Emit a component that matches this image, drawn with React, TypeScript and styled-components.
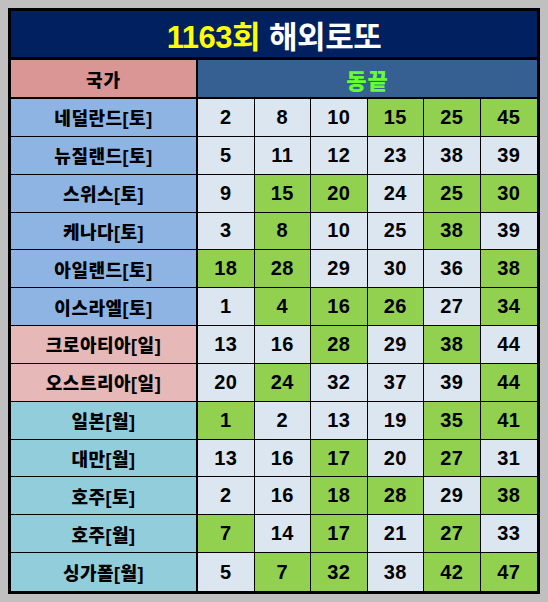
import styled, { createGlobalStyle } from "styled-components";

const GlobalStyle = createGlobalStyle`
  html, body {
    margin: 0;
    padding: 0;
    background: #c0c0c0;
  }
  body {
    font-family: "Liberation Sans", "Noto Sans CJK KR", sans-serif;
  }
`;

const Page = styled.div`
  padding: 8px 0 0 8px;
  width: 548px;
  height: 602px;
  box-sizing: border-box;
`;

const Board = styled.div`
  width: 532px;
  height: 586px;
  box-sizing: border-box;
  border: 3px solid #000;
  display: grid;
  grid-template-columns: 187px repeat(6, 1fr);
  grid-template-rows: 49px 39px repeat(13, 1fr);
`;

const Title = styled.div`
  grid-column: 1 / -1;
  box-sizing: border-box;
  border-bottom: 3px solid #000;
  background: #002060;
  display: flex;
  align-items: center;
  justify-content: center;
  gap: 9px;
  font-size: 31px;
  font-weight: bold;
  letter-spacing: -0.5px;
`;

const Round = styled.span`
  color: #ffff00;
`;

const Name = styled.span`
  color: #ffffff;
`;

const HeadCell = styled.div<{ $bg: string; $color: string; $size: number; $span?: number }>`
  grid-column: span ${(p) => p.$span ?? 1};
  box-sizing: border-box;
  border-bottom: 2px solid #000;
  border-right: ${(p) => (p.$span ? "none" : "2px solid #000")};
  background: ${(p) => p.$bg};
  color: ${(p) => p.$color};
  font-size: ${(p) => p.$size}px;
  font-weight: 900;
  letter-spacing: 1px;
  display: flex;
  align-items: center;
  justify-content: center;
`;

const Country = styled.div<{ $bg: string; $last: boolean }>`
  box-sizing: border-box;
  border-right: 2px solid #000;
  border-bottom: ${(p) => (p.$last ? "none" : "1px solid #000")};
  background: ${(p) => p.$bg};
  color: #000;
  font-size: 18px;
  font-weight: 900;
  letter-spacing: 0.5px;
  display: flex;
  align-items: center;
  justify-content: center;
`;

const Num = styled.div<{ $hit: boolean; $last: boolean; $end: boolean }>`
  box-sizing: border-box;
  border-right: ${(p) => (p.$end ? "none" : "1px solid #000")};
  border-bottom: ${(p) => (p.$last ? "none" : "1px solid #000")};
  background: ${(p) => (p.$hit ? "#92d050" : "#dce6f1")};
  color: #000;
  font-size: 20px;
  font-weight: bold;
  letter-spacing: 0.5px;
  display: flex;
  align-items: center;
  justify-content: center;
`;

const BLUE = "#8db4e2";
const PINK = "#e6b8b7";
const TEAL = "#92cddc";

type Row = { name: string; bg: string; nums: number[]; hits: number[] };

const rows: Row[] = [
  { name: "네덜란드[토]", bg: BLUE, nums: [2, 8, 10, 15, 25, 45], hits: [15, 25, 45] },
  { name: "뉴질랜드[토]", bg: BLUE, nums: [5, 11, 12, 23, 38, 39], hits: [] },
  { name: "스위스[토]", bg: BLUE, nums: [9, 15, 20, 24, 25, 30], hits: [15, 20, 25, 30] },
  { name: "케나다[토]", bg: BLUE, nums: [3, 8, 10, 25, 38, 39], hits: [8, 38] },
  { name: "아일랜드[토]", bg: BLUE, nums: [18, 28, 29, 30, 36, 38], hits: [18, 28, 38] },
  { name: "이스라엘[토]", bg: BLUE, nums: [1, 4, 16, 26, 27, 34], hits: [4, 16, 26, 34] },
  { name: "크로아티아[일]", bg: PINK, nums: [13, 16, 28, 29, 38, 44], hits: [28, 38] },
  { name: "오스트리아[일]", bg: PINK, nums: [20, 24, 32, 37, 39, 44], hits: [24, 44] },
  { name: "일본[월]", bg: TEAL, nums: [1, 2, 13, 19, 35, 41], hits: [1, 35, 41] },
  { name: "대만[월]", bg: TEAL, nums: [13, 16, 17, 20, 27, 31], hits: [17, 27] },
  { name: "호주[토]", bg: TEAL, nums: [2, 16, 18, 28, 29, 38], hits: [18, 28, 38] },
  { name: "호주[월]", bg: TEAL, nums: [7, 14, 17, 21, 27, 33], hits: [7, 17, 27] },
  { name: "싱가폴[월]", bg: TEAL, nums: [5, 7, 32, 38, 42, 47], hits: [7, 32, 42, 47] },
];

export default function App() {
  return (
    <Page>
      <GlobalStyle />
      <Board>
        <Title>
          <Round>1163회</Round>
          <Name>해외로또</Name>
        </Title>
        <HeadCell $bg="#da9694" $color="#000" $size={18}>
          국가
        </HeadCell>
        <HeadCell $bg="#366092" $color="#66ff33" $size={22} $span={6}>
          동끝
        </HeadCell>
        {rows.map((row, r) => {
          const last = r === rows.length - 1;
          return [
            <Country key={row.name + r} $bg={row.bg} $last={last}>
              {row.name}
            </Country>,
            ...row.nums.map((n, i) => (
              <Num
                key={`${r}-${i}`}
                $hit={row.hits.includes(n)}
                $last={last}
                $end={i === row.nums.length - 1}
              >
                {n}
              </Num>
            )),
          ];
        })}
      </Board>
    </Page>
  );
}
